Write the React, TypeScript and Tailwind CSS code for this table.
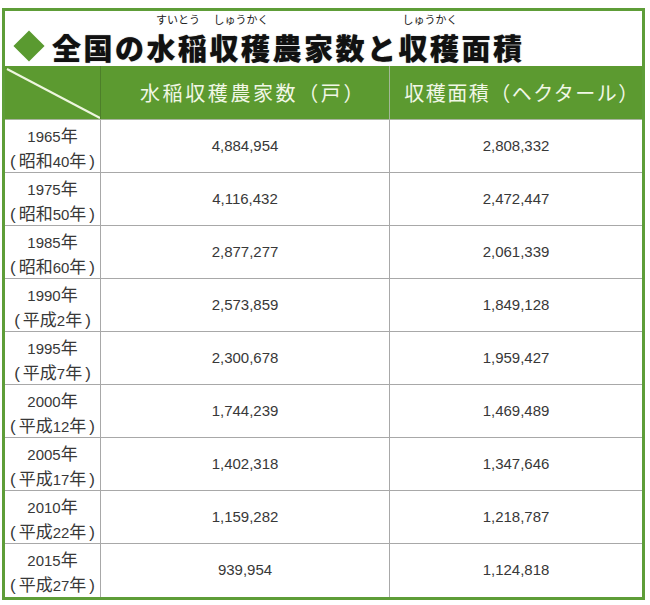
import React from "react";

const rows: { year: string; era: string; farms: string; area: string }[] = [
  { year: "1965", era: "昭和40年", farms: "4,884,954", area: "2,808,332" },
  { year: "1975", era: "昭和50年", farms: "4,116,432", area: "2,472,447" },
  { year: "1985", era: "昭和60年", farms: "2,877,277", area: "2,061,339" },
  { year: "1990", era: "平成2年", farms: "2,573,859", area: "1,849,128" },
  { year: "1995", era: "平成7年", farms: "2,300,678", area: "1,959,427" },
  { year: "2000", era: "平成12年", farms: "1,744,239", area: "1,469,489" },
  { year: "2005", era: "平成17年", farms: "1,402,318", area: "1,347,646" },
  { year: "2010", era: "平成22年", farms: "1,159,282", area: "1,218,787" },
  { year: "2015", era: "平成27年", farms: "939,954", area: "1,124,818" },
];

const jp = { fontFamily: '"Noto Sans CJK JP", "Liberation Sans", sans-serif' };
const num = { fontFamily: '"Liberation Sans", "Noto Sans CJK JP", sans-serif' };

function Furi({ base, reading }: { base: string; reading: string }) {
  return (
    <span className="inline-flex flex-col items-center">
      <span className="mb-[5px] text-[11px] font-normal tracking-normal text-[#222] leading-[12px] [text-shadow:none]">
        {reading}
      </span>
      <span>{base}</span>
    </span>
  );
}

// splits "昭和40年" so digits use the narrower latin face
function Era({ text }: { text: string }) {
  const m = text.match(/^(\D+)(\d+)(年)$/);
  if (!m) return <>{text}</>;
  return (
    <>
      {m[1]}
      <span style={num} className="text-[15px]">
        {m[2]}
      </span>
      {m[3]}
    </>
  );
}

export default function App() {
  return (
    <div className="w-[650px] h-[605px] bg-white pt-[8px] pl-[2px]" style={jp}>
      <div className="w-[643px] h-[592px] border-[3px] border-[#5e9d38] flex flex-col">
        {/* Title */}
        <div className="h-[55px] flex items-end pl-[8px] pb-[2px] bg-white">
          <div className="w-[31px] h-[31px] flex items-center justify-center mb-[3px] mr-[8px]">
            <div className="w-[22px] h-[22px] bg-[#5a9a30] rotate-45" />
          </div>
          <h1 className="flex items-end text-[29px] font-black leading-[34px] tracking-[2.5px] text-[#111] [text-shadow:0_0_1px_#777]">
            <span>全国の</span>
            <Furi base="水稲" reading="すいとう" />
            <Furi base="収穫" reading="しゅうかく" />
            <span>農家数と</span>
            <Furi base="収穫" reading="しゅうかく" />
            <span>面積</span>
          </h1>
        </div>

        {/* Header */}
        <div className="h-[54px] grid grid-cols-[96px_289px_252px] bg-[#5c9a30] border-b border-[#a9b59f]">
          <div className="relative border-r border-[#4d7f2a]">
            <svg className="absolute inset-0" width="95" height="53" viewBox="0 0 95 53">
              <line x1="2" y1="3" x2="95" y2="52" stroke="#eef6df" strokeWidth="2" />
            </svg>
          </div>
          <div className="flex items-center justify-center pl-[16px] border-r border-[#a3b896] text-[20px] tracking-[2.6px] text-[#f1f7e6]">
            水稲収穫農家数（戸）
          </div>
          <div className="flex items-center justify-center pl-[12px] text-[20px] tracking-[1.5px] text-[#f1f7e6]">
            収穫面積（ヘクタール）
          </div>
        </div>

        {/* Body */}
        {rows.map((r, i) => (
          <div
            key={r.year}
            className={`h-[53px] grid grid-cols-[96px_289px_252px] text-[#383838] ${
              i < rows.length - 1 ? "border-b border-[#a8a8a8]" : ""
            }`}
          >
            <div className="flex flex-col items-center justify-center pt-[3px] border-r border-[#a8a8a8] text-[17px] leading-[23px]">
              <span className="whitespace-nowrap">
                <span style={num} className="text-[15px]">
                  {r.year}
                </span>
                年
              </span>
              <span className="whitespace-nowrap">
                <span style={num} className="mr-[3px]">
                  (
                </span>
                <Era text={r.era} />
                <span style={num} className="ml-[3px]">
                  )
                </span>
              </span>
            </div>
            <div className="flex items-center justify-center border-r border-[#a8a8a8] text-[15px] pb-[1px]" style={num}>
              {r.farms}
            </div>
            <div className="flex items-center justify-center text-[15px] pb-[1px]" style={num}>
              {r.area}
            </div>
          </div>
        ))}
      </div>
    </div>
  );
}
